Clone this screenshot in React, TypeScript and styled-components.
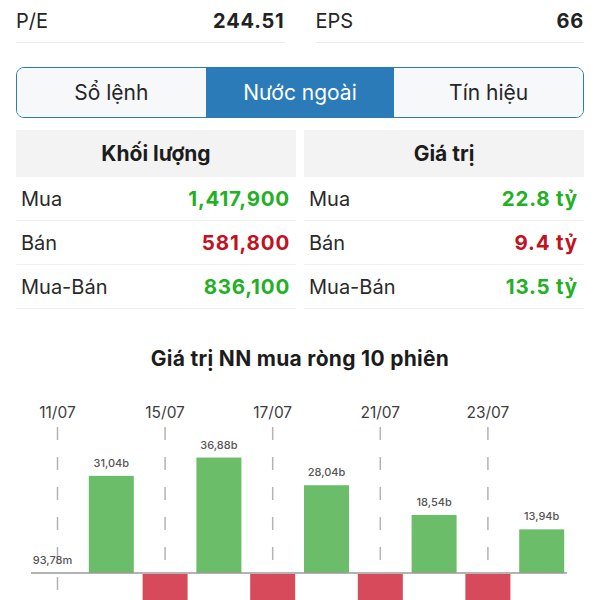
import React from "react";
import styled, { createGlobalStyle } from "styled-components";

const GlobalStyle = createGlobalStyle`
  body {
    margin: 0;
    background: #ffffff;
    font-family: Inter, "Noto Sans", Roboto, sans-serif;
    color: #1f1f1f;
  }
`;

const Page = styled.div`
  width: 600px;
  height: 600px;
  overflow: hidden;
  background: #ffffff;
`;

const Padded = styled.div`
  padding: 0 16px;
`;

const StatGrid = styled.div`
  display: grid;
  grid-template-columns: 1fr 1fr;
  column-gap: 31px;
`;

const StatCell = styled.div`
  display: flex;
  justify-content: space-between;
  align-items: center;
  height: 42px;
  border-top: 1px solid #f1f1f1;
  border-bottom: 1px solid #ececec;
  margin-top: -1px;
  font-size: 20px;
`;

const StatLabel = styled.span`
  color: #262626;
`;

const StatValue = styled.span`
  font-weight: 700;
  letter-spacing: 0.8px;
  color: #222222;
`;

const Segmented = styled.div`
  display: grid;
  grid-template-columns: repeat(3, 1fr);
  box-sizing: border-box;
  height: 51px;
  margin-top: 24px;
  border: 1.5px solid #2b7bb9;
  border-radius: 8px;
  overflow: hidden;
`;

const Segment = styled.div<{ $active?: boolean }>`
  display: flex;
  align-items: center;
  justify-content: center;
  font-size: 21px;
  background: ${(p) => (p.$active ? "#2a7bb8" : "#f6f8fa")};
  color: ${(p) => (p.$active ? "#ffffff" : "#262626")};
`;

const TablesGrid = styled.div`
  display: grid;
  grid-template-columns: 1fr 1fr;
  column-gap: 8px;
  margin-top: 12px;
`;

const Table = styled.div`
  display: flex;
  flex-direction: column;
`;

const TableHeader = styled.div`
  height: 47px;
  display: flex;
  align-items: center;
  justify-content: center;
  background: #f3f3f3;
  font-size: 21px;
  font-weight: 700;
  color: #1c1c1c;
`;

const TableRow = styled.div`
  height: 43px;
  display: flex;
  align-items: center;
  justify-content: space-between;
  padding: 0 6px 0 5px;
  border-bottom: 1px solid #efefef;
  font-size: 20px;
`;

const RowLabel = styled.span`
  color: #2a2a2a;
`;

const RowValue = styled.span<{ $tone: "up" | "down" }>`
  font-weight: 700;
  font-size: 20.5px;
  letter-spacing: 0.8px;
  color: ${(p) => (p.$tone === "up" ? "#22b024" : "#c0121f")};
`;

const ChartTitle = styled.div`
  margin-top: 37px;
  height: 26px;
  line-height: 26px;
  text-align: center;
  font-size: 21px;
  font-weight: 700;
  letter-spacing: 0.3px;
  color: #1c1c1c;
`;

const ChartSvg = styled.svg`
  display: block;
  margin-top: 20px;
`;

const volumes = [
  { label: "Mua", value: "1,417,900", tone: "up" as const },
  { label: "Bán", value: "581,800", tone: "down" as const },
  { label: "Mua-Bán", value: "836,100", tone: "up" as const },
];

const values = [
  { label: "Mua", value: "22.8 tỷ", tone: "up" as const },
  { label: "Bán", value: "9.4 tỷ", tone: "down" as const },
  { label: "Mua-Bán", value: "13.5 tỷ", tone: "up" as const },
];

// net foreign buy per session, in billions
const sessions = [
  { date: "11/07", v: 0.09378, text: "93,78m" },
  { date: "12/07", v: 31.04, text: "31,04b" },
  { date: "15/07", v: -12 },
  { date: "16/07", v: 36.88, text: "36,88b" },
  { date: "17/07", v: -12 },
  { date: "18/07", v: 28.04, text: "28,04b" },
  { date: "21/07", v: -12 },
  { date: "22/07", v: 18.54, text: "18,54b" },
  { date: "23/07", v: -12 },
  { date: "24/07", v: 13.94, text: "13,94b" },
];

const BASE = 181;
const SCALE = 3.13;
const X0 = 57.5;
const STEP = 53.8;
const BAR_W = 45;

const Chart: React.FC = () => (
  <ChartSvg width={600} height={208} viewBox="0 0 600 208">
    {sessions.map((s, i) =>
      i % 2 === 0 ? (
        <g key={`d${i}`}>
          <text
            x={X0 + i * STEP}
            y={26}
            textAnchor="middle"
            fontSize={15.5}
            fill="#3d3d3d"
            fontFamily="Inter, sans-serif"
          >
            {s.date}
          </text>
          <line
            x1={X0 + i * STEP}
            x2={X0 + i * STEP}
            y1={35}
            y2={208}
            stroke="#b3b3b3"
            strokeWidth={1.5}
            strokeDasharray="13 17"
          />
        </g>
      ) : null
    )}
    {sessions.map((s, i) => {
      const cx = X0 + i * STEP;
      if (s.v < 0) {
        return (
          <rect
            key={`b${i}`}
            x={cx - BAR_W / 2}
            y={BASE + 1}
            width={BAR_W}
            height={40}
            fill="#d64a5b"
          />
        );
      }
      const h = s.v * SCALE;
      return (
        <g key={`b${i}`}>
          {h > 1 && (
            <rect
              x={cx - BAR_W / 2}
              y={BASE - h}
              width={BAR_W}
              height={h}
              fill="#6cbd69"
            />
          )}
          <text
            x={i === 0 ? cx - 5 : cx}
            y={BASE - h - 9}
            textAnchor="middle"
            fontSize={11}
            fontWeight={500}
            fill="#555555"
            fontFamily="Inter, sans-serif"
          >
            {s.text}
          </text>
        </g>
      );
    })}
    <line x1={31} x2={567} y1={BASE} y2={BASE} stroke="#9a9a9a" strokeWidth={1.5} />
  </ChartSvg>
);

const App: React.FC = () => (
  <Page>
    <GlobalStyle />
    <Padded>
      <StatGrid>
        <StatCell>
          <StatLabel>P/E</StatLabel>
          <StatValue>244.51</StatValue>
        </StatCell>
        <StatCell>
          <StatLabel>EPS</StatLabel>
          <StatValue>66</StatValue>
        </StatCell>
      </StatGrid>
      <Segmented>
        <Segment>Sổ lệnh</Segment>
        <Segment $active>Nước ngoài</Segment>
        <Segment>Tín hiệu</Segment>
      </Segmented>
      <TablesGrid>
        <Table>
          <TableHeader>Khối lượng</TableHeader>
          {volumes.map((r) => (
            <TableRow key={r.label}>
              <RowLabel>{r.label}</RowLabel>
              <RowValue $tone={r.tone}>{r.value}</RowValue>
            </TableRow>
          ))}
        </Table>
        <Table>
          <TableHeader>Giá trị</TableHeader>
          {values.map((r) => (
            <TableRow key={r.label}>
              <RowLabel>{r.label}</RowLabel>
              <RowValue $tone={r.tone}>{r.value}</RowValue>
            </TableRow>
          ))}
        </Table>
      </TablesGrid>
    </Padded>
    <ChartTitle>Giá trị NN mua ròng 10 phiên</ChartTitle>
    <Chart />
  </Page>
);

export default App;
